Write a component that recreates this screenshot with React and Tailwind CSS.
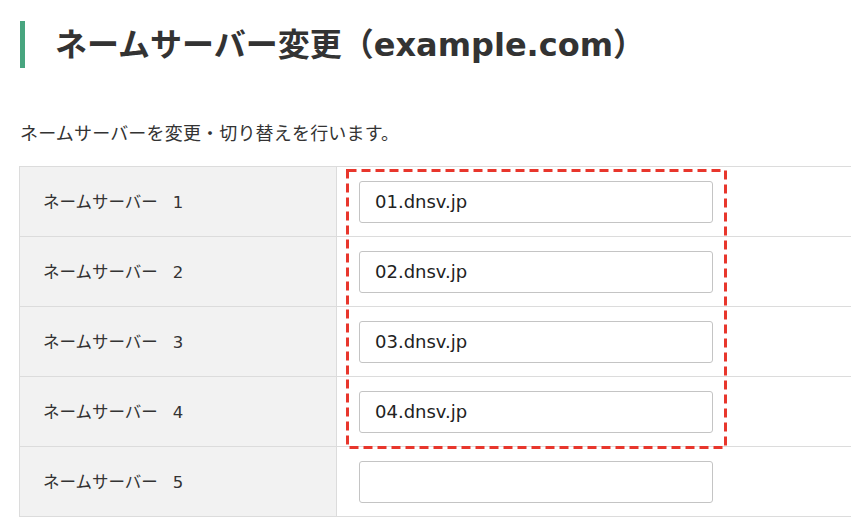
import React from "react";

const servers = ["01.dnsv.jp", "02.dnsv.jp", "03.dnsv.jp", "04.dnsv.jp", ""];

const App = () => {
  return (
    <div
      className="relative w-[851px] h-[521px] overflow-hidden bg-white text-[#333]"
      style={{ fontFamily: '"DejaVu Sans", "Noto Sans CJK JP", sans-serif' }}
    >
      {/* Heading */}
      <h1 className="mt-[21px] ml-[20px] h-[47px] border-l-[5px] border-[#48a57f] pl-[30px] flex items-center text-[32px] font-bold leading-none">
        ネームサーバー変更（example.com）
      </h1>

      <p className="mt-[54px] ml-[20px] text-[18px] leading-[24px] tracking-[0.01em]">
        ネームサーバーを変更・切り替えを行います。
      </p>

      {/* Table */}
      <div className="mt-[20px] ml-[19px] w-[900px] border-t border-l border-[#dcdcdc]">
        {servers.map((value, i) => (
          <div key={i} className="grid grid-cols-[317px_1fr] h-[70px]">
            <div className="bg-[#f2f2f2] border-r border-b border-[#dcdcdc] pl-[23px] pt-[4px] flex items-center text-[16.5px]">
              ネームサーバー
              <span className="ml-[15px]">{i + 1}</span>
            </div>
            <div className="border-b border-[#dcdcdc] pl-[22px] flex items-center">
              <input
                type="text"
                defaultValue={value}
                className="w-[354px] h-[42px] border border-[#c4c4c4] rounded-[3px] px-[15px] text-[18px] text-[#222] outline-none"
              />
            </div>
          </div>
        ))}
      </div>

      {/* Highlight */}
      <svg
        className="absolute left-[346px] top-[169px]"
        width="381"
        height="280"
        viewBox="0 0 381 280"
      >
        <rect
          x="1.5"
          y="1.5"
          width="378"
          height="277"
          fill="none"
          stroke="#e8362c"
          strokeWidth="3"
          strokeDasharray="9 5"
        />
      </svg>
    </div>
  );
};

export default App;
